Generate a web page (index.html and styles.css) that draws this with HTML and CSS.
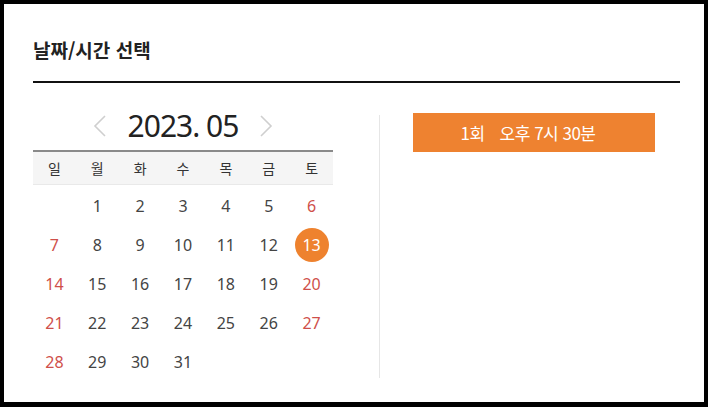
FILE: index.html
```html
<!DOCTYPE html>
<html lang="ko">
<head>
<meta charset="utf-8">
<link rel="stylesheet" href="styles.css">
</head>
<body>
<div class="frame">
  <h2 class="title">날짜/시간 선택</h2>
  <div class="content">
    <div class="calendar">
      <div class="month-row">
        <span class="arrow"><svg width="14" height="22" viewBox="0 0 14 22"><polyline points="12,1 2,11 12,21" fill="none" stroke="#cfcfcf" stroke-width="1.6"/></svg></span>
        <span class="month">2023. 05</span>
        <span class="arrow"><svg width="14" height="22" viewBox="0 0 14 22"><polyline points="2,1 12,11 2,21" fill="none" stroke="#cfcfcf" stroke-width="1.6"/></svg></span>
      </div>
      <div class="weekdays">
        <span>일</span><span>월</span><span>화</span><span>수</span><span>목</span><span>금</span><span>토</span>
      </div>
      <div class="days">
        <span></span><span>1</span><span>2</span><span>3</span><span>4</span><span>5</span><span class="red">6</span>
        <span class="red">7</span><span>8</span><span>9</span><span>10</span><span>11</span><span>12</span><span class="sel"><b>13</b></span>
        <span class="red">14</span><span>15</span><span>16</span><span>17</span><span>18</span><span>19</span><span class="red">20</span>
        <span class="red">21</span><span>22</span><span>23</span><span>24</span><span>25</span><span>26</span><span class="red">27</span>
        <span class="red">28</span><span>29</span><span>30</span><span>31</span><span></span><span></span><span></span>
      </div>
    </div>
    <div class="divider"></div>
    <div class="times">
      <button class="time-btn"><span class="round">1회</span><span>오후 7시 30분</span></button>
    </div>
  </div>
</div>
</body>
</html>
```
FILE: styles.css
```css
* { box-sizing: border-box; }
html, body { margin: 0; padding: 0; }
body {
  width: 708px;
  height: 407px;
  font-family: "Noto Sans", "Noto Sans CJK KR", sans-serif;
  color: #333;
  background: #000;
}
.frame {
  width: 708px;
  height: 407px;
  background: #fff;
  border-style: solid;
  border-color: #000;
  border-width: 4px 4px 5px 4px;
  padding: 0 24px 0 29px;
}
.title {
  margin: 0;
  padding-top: 33px;
  padding-bottom: 18px;
  font-family: "Noto Sans CJK KR", sans-serif;
  font-size: 19px;
  line-height: 26px;
  font-weight: 700;
  color: #222;
  letter-spacing: 0;
  border-bottom: 2px solid #111;
}
.content {
  display: flex;
  padding-top: 30px;
}
.calendar {
  width: 300px;
}
.month-row {
  display: flex;
  justify-content: center;
  align-items: center;
  height: 26px;
  margin-bottom: 11px;
  gap: 21px;
}
.arrow { display: flex; width: 14px; height: 22px; }
.month {
  font-size: 30px;
  line-height: 26px;
  color: #222;
  letter-spacing: -1px;
}
.weekdays {
  display: grid;
  grid-template-columns: repeat(7, 1fr);
  border-top: 2px solid #8a8a8a;
  border-bottom: 1px solid #e9e9e9;
  background: #f5f5f5;
  height: 35px;
  align-items: center;
}
.weekdays span {
  text-align: center;
  font-family: "Noto Sans CJK KR", sans-serif;
  font-size: 14px;
  color: #333;
}
.days {
  display: grid;
  grid-template-columns: repeat(7, 1fr);
  grid-auto-rows: 39px;
  padding-top: 1px;
}
.days span {
  display: flex;
  align-items: center;
  justify-content: center;
  font-size: 16px;
  color: #444;
}
.days .red { color: #cf4f4a; }
.days .sel b {
  display: flex;
  align-items: center;
  justify-content: center;
  width: 34px;
  height: 34px;
  border-radius: 50%;
  background: #ee822e;
  color: #fff;
  font-weight: 400;
}
.divider {
  width: 1px;
  background: #e6e6e6;
  margin: 2px 0 3px 46px;
}
.times {
  padding-left: 33px;
}
.time-btn {
  display: flex;
  align-items: center;
  justify-content: center;
  width: 242px;
  height: 39px;
  border: 0;
  background: #ee8230;
  color: #fff;
  font-family: "Noto Sans CJK KR", sans-serif;
  font-size: 17px;
  letter-spacing: -0.5px;
  padding: 0 12px 0 0;
}
.round { margin-right: 15px; }
```
